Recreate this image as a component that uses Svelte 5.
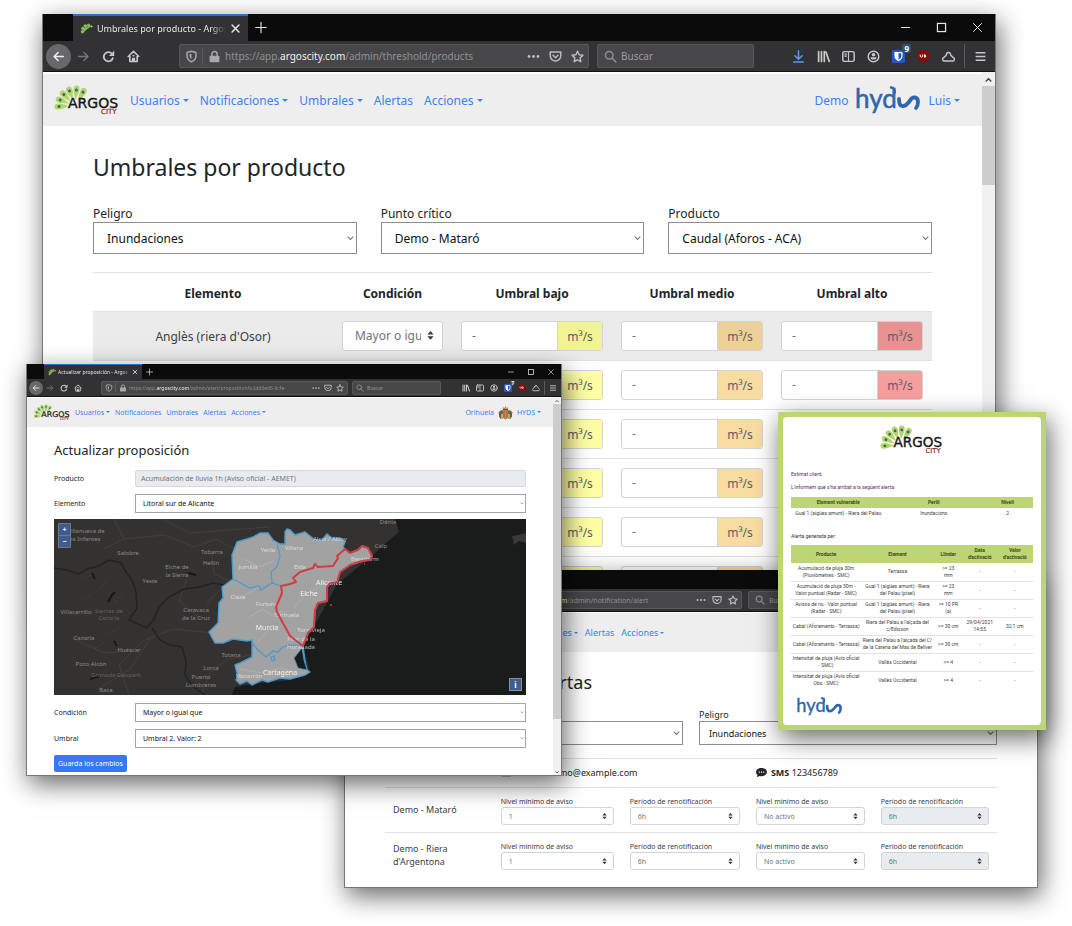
<script>
  const rows = [0, 1, 2, 3, 4, 5];
  const levels = ['low', 'mid', 'high'];
  const filters = [
    { id: 'peligro', label: 'Peligro', value: 'Inundaciones' },
    { id: 'punto', label: 'Punto crítico', value: 'Demo - Mataró' },
    { id: 'producto', label: 'Producto', value: 'Caudal (Aforos - ACA)' }
  ];
  const menuAll = [
    ['Usuarios', true], ['Notificaciones', true], ['Umbrales', true], ['Alertas', false], ['Acciones', true]
  ];
  const menuShort = [
    ['Usuarios', true], ['Notificaciones', false], ['Umbrales', false], ['Alertas', false], ['Acciones', true]
  ];
  const points = ['Demo - Mataró', "Demo - Riera d'Argentona"];
  const notices = [
    { label: 'Nivel mínimo de aviso', value: '1', off: false },
    { label: 'Período de renotificación', value: '6h', off: false },
    { label: 'Nivel mínimo de aviso', value: 'No activo', off: false },
    { label: 'Período de renotificación', value: '6h', off: true }
  ];
  const mail = [
    ['Acumulació de pluja 30m\n(Pluviòmetres - SMC)', 'Terrassa', '>= 23\nmm', '-', '-'],
    ['Acumulació de pluja 30m -\nValor puntual (Radar - SMC)', 'Gual 1 (aigües amunt) - Riera\ndel Palau (píxel)', '>= 23\nmm', '-', '-'],
    ['Avisos de riu - Valor puntual\n(Radar - SMC)', 'Gual 1 (aigües amunt) - Riera\ndel Palau (píxel)', '>= 10 PR\n(a)', '-', '-'],
    ['Cabal (Aforaments - Terrassa)', "Riera del Palau a l'alçada del\nc/Edisson", '>= 30 cm', '29/04/2021\n14:55', '32,1 cm'],
    ['Cabal (Aforaments - Terrassa)', "Riera del Palau a l'alçada del C/\nde la Carena del Mas de Bellver", '>= 30 cm', '-', '-'],
    ['Intensitat de pluja (Avís oficial\n- SMC)', 'Vallès Occidental', '>= 4', '-', '-'],
    ['Intensitat de pluja (Avís oficial\nObs - SMC)', 'Vallès Occidental', '>= 4', '-', '-']
  ];
  const petals = [-92, -68, -44, -20, 5, 30];
  const places = [
    [32, 14, 'Villanueva de'], [30, 22, 'los Infantes'], [74, 36, 'Salobre'], [158, 35, 'Tobarra'],
    [157, 46, 'Hellín'], [123, 50, 'Elche de'], [123, 58, 'la Sierra'], [96, 64, 'Yeste'],
    [22, 95, 'Villacarrillo'], [142, 93, 'Caravaca'], [142, 101, 'de la Cruz'], [30, 121, 'Cazorla'],
    [75, 133, 'Huéscar'], [37, 147, 'Pozo Alcón'], [177, 138, 'Totana'], [157, 151, 'Lorca'],
    [147, 160, 'Puerto'], [147, 168, 'Lumbreras'], [52, 173, 'Baza'], [327, 29, 'Calp'], [334, 5, 'Dénia']
  ];
  const parks = [[55, 94, 'Sierras de'], [55, 101, 'Cazorla'], [62, 158, 'Granada Geopark']];
  const inland = [
    [214, 33, 'Yecla'], [194, 50, 'Jumilla'], [184, 80, 'Cieza'], [213, 87, 'Fortuna'], [240, 31, 'Villena'],
    [246, 50, 'Elda'], [233, 98, 'Orihuela'], [276, 22, 'Alcoi / Alcoy'], [311, 42, 'Benidorm'], [257, 113, 'Torrevieja'],
    [247, 122, 'Pilar de la'], [247, 130, 'Horadada'], [195, 159, 'Mazarrón']
  ];
  const cities = [[213, 111, 'Murcia'], [275, 66, 'Alicante'], [255, 77, 'Elche'], [226, 156, 'Cartagena']];
</script>

{#snippet glyph(name)}
  <svg class="ic" viewBox="0 0 16 16" fill="none" stroke="currentColor" stroke-width="1.8" stroke-linecap="round" stroke-linejoin="round" aria-hidden="true">
    {#if name === 'back'}<path d="M14 8H2.5M7.5 3L2.5 8l5 5" />
    {:else if name === 'fwd'}<path d="M2 8h11.500M8.500 3l5 5-5 5" />
    {:else if name === 'reload'}<path d="M13.300 10A5.700 5.700 0 1 1 12 4.300" stroke-width="2.200" /><path d="M15 1v6.500H8.500z" fill="currentColor" stroke="none" />
    {:else if name === 'home'}<path d="M1.500 8L8 1.800 14.500 8M3.500 8v6.200h9V8M7 14v-3.500h2V14" stroke-width="2" /><path d="M7.500 7h1" />
    {:else if name === 'shield'}<path d="M8 1.500l5.500 1.500v4c0 4-2.500 6.300-5.500 7.500C5 13.300 2.500 11 2.500 7V3z" /><path d="M8 4.500v6.500C6 10 5.500 8.500 5.500 5.200z" fill="currentColor" stroke="none" />
    {:else if name === 'lock'}<path d="M4.800 7.500V5a3.200 3.200 0 0 1 6.400 0v2.500" /><rect x="2" y="7" width="12" height="8" rx="1" fill="currentColor" stroke="none" />
    {:else if name === 'dots'}<g fill="currentColor" stroke="none"><circle cx="2.500" cy="8" r="1.700" /><circle cx="8" cy="8" r="1.700" /><circle cx="13.500" cy="8" r="1.700" /></g>
    {:else if name === 'pocket'}<path d="M1.500 2.500h13v4.500a6.500 6.500 0 0 1-13 0zM5 6.500l3 3 3-3" />
    {:else if name === 'star'}<path d="M8 1.500l2 4.300 4.700.6-3.400 3.300.8 4.700L8 12.100l-4.100 2.300.8-4.700L1.300 6.400 6 5.800z" />
    {:else if name === 'mag'}<circle cx="6.500" cy="6.500" r="4.700" /><path d="M10 10l4.700 4.700" />
    {:else if name === 'down'}<path d="M8 1v10M3.500 7L8 11.300 12.500 7M2 14.800h12" stroke="#5a9df5" />
    {:else if name === 'lib'}<path d="M2 2v12M5.500 2v12M9 2v12M11 2.500l4 11.500" stroke-width="2.100" />
    {:else if name === 'side'}<rect x="1" y="2" width="14" height="12" rx="2" /><path d="M8 2v12M3.500 5h2M3.500 7.500h2" stroke-width="1.400" />
    {:else if name === 'user'}<circle cx="8" cy="8" r="6.500" /><path d="M4.300 8.800h7.400a3.700 3 0 0 1-7.400 0z" fill="currentColor" stroke="none" /><circle cx="8" cy="5.800" r="2.200" fill="currentColor" stroke="none" />
    {:else if name === 'vault'}<rect x="0" y="0" width="16" height="16" rx="1.500" fill="#2457c9" stroke="none" /><path d="M3 2.500h10v5c0 3-2 5-5 6.300C5 12.500 3 10.500 3 7.500z" fill="#fff" stroke="none" /><path d="M8 4h3.500v3.500c0 2-1.500 3.500-3.500 4.500z" fill="#2457c9" stroke="none" />
    {:else if name === 'ublock'}<path d="M8 0l7.500 2v6c0 3.500-4 6.500-7.500 8C4.500 14.500.5 11.500.5 8V2z" fill="#800f0d" stroke="none" /><path d="M4 6v2q1.500 1.500 3 0V6M9.300 6v3h.8q2-1.500 0-3z" stroke="#fff" stroke-width="1.200" />
    {:else if name === 'tri'}<path d="M5.500 5.500a2.500 2.500 0 0 1 5 0q0 1 1 1.700l2.700 2.300a2.200 2.200 0 0 1-1.700 4h-9a2.200 2.200 0 0 1-1.700-4l2.700-2.300q1-.7 1-1.700z" />
    {:else if name === 'menu'}<path d="M2 3.500h12M2 8h12M2 12.500h12" stroke-linecap="butt" />
    {:else if name === 'min'}<path d="M3 8h10" stroke-width="1.300" />
    {:else if name === 'max'}<rect x="3" y="3" width="10" height="10" stroke-width="1.500" stroke-linejoin="miter" />
    {:else if name === 'x'}<path d="M3 3l10 10M13 3L3 13" stroke-width="1.200" />
    {:else if name === 'close'}<path d="M3 3l10 10M13 3L3 13" stroke-width="2.200" />
    {:else if name === 'plus'}<path d="M8 1v14M1 8h14" stroke-width="1.500" />
    {:else if name === 'fav'}<g fill="#8cbf5a" stroke="#8cbf5a" stroke-width="1"><circle cx="3" cy="12" r="1.500" /><circle cx="3.500" cy="8" r="1.600" /><circle cx="6.500" cy="5" r="1.700" /><circle cx="10.500" cy="4" r="1.500" /><circle cx="14" cy="5.500" r="1" /><path d="M3 13l3-5 7-3-5 4z" /></g>
    {/if}
  </svg>
{/snippet}

{#snippet argos()}
  <svg class="argos" viewBox="0 0 64 30" role="img" aria-label="Argos City">
    {#each petals as a}
      <g transform="translate(20 21) rotate({a})">
        <path d="M0-6C-1-10-3-13-3-16.500C-3-19.500-2-20.500 0-20.500C2-20.500 3-19.500 3-16.500C3-13 1-10 0-6z" fill="#b4d56b" />
        <circle cy="-16" r="1.500" fill="#2f6f66" />
      </g>
    {/each}
    <text x="13" y="23" font-family="DejaVu Sans" font-size="14" fill="#161616" stroke="#161616" stroke-width=".4">ARGOS</text>
    <text x="46" y="29" font-family="DejaVu Sans" font-size="7" fill="#8a2a2a" stroke="#8a2a2a" stroke-width=".2">CITY</text>
  </svg>
{/snippet}

{#snippet hyds()}
  <svg class="hyds" viewBox="0 0 64 28" role="img" aria-label="hyds" fill="none" stroke="#2f66ad" stroke-linecap="round">
    <text x="-1" y="22" font-family="Lato" font-size="26" fill="#2f66ad" stroke="#2f66ad" stroke-width=".5">hyd</text>
    <path d="M35 1.500q4 0 3.800 5" stroke-width="2.400" />
    <path d="M43 13C43 23 49 21 53 16C57 9 62 11 62 16C62 19 61 21 60 22" stroke-width="3.800" />
  </svg>
{/snippet}

{#snippet updown()}
  <svg class="ud" viewBox="0 0 8 10" aria-hidden="true"><path d="M0.500 4L4 0l3.500 4zM0.500 6L4 10l3.500-4z" fill="#343a40" /></svg>
{/snippet}

{#snippet picker(id, value)}
  <span class="sel">
    <select {id}><option>{value}</option></select>
    <svg class="chev" viewBox="0 0 10 6" aria-hidden="true"><path d="M1 1l4 4 4-4" fill="none" stroke="#777" stroke-width="1.500" /></svg>
  </span>
{/snippet}

{#snippet chrome(title, host, path, badge, tools)}
  <header class="tabs">
    <div class="tab">{@render glyph('fav')}<span class="tabname">{title}</span><button aria-label="Cerrar pestaña">{@render glyph('close')}</button></div>
    <button class="newtab" aria-label="Nueva pestaña">{@render glyph('plus')}</button>
    <div class="winctl">
      <button aria-label="Minimizar">{@render glyph('min')}</button>
      <button aria-label="Maximizar">{@render glyph('max')}</button>
      <button aria-label="Cerrar">{@render glyph('x')}</button>
    </div>
  </header>
  <div class="bar">
    <button class="cell back" aria-label="Atrás">{@render glyph('back')}</button>
    <button class="cell dim" aria-label="Adelante">{@render glyph('fwd')}</button>
    <button class="cell" aria-label="Recargar">{@render glyph('reload')}</button>
    <button class="cell" aria-label="Inicio">{@render glyph('home')}</button>
    <div class="url">
      <span class="cell mute">{@render glyph('shield')}</span><i class="sep"></i>
      <span class="cell mute">{@render glyph('lock')}</span>
      <span class="addr">https://app.<b>{host}</b>{path}</span>
      <span class="act">{@render glyph('dots')}{@render glyph('pocket')}{@render glyph('star')}</span>
    </div>
    <div class="search">{@render glyph('mag')}<input aria-label="Buscar" placeholder="Buscar" /></div>
    <div class="tools">
      {#each tools as t}
        <button class="cell" aria-label={t}>{@render glyph(t)}{#if t === 'vault'}<sup>{badge}</sup>{/if}</button>
      {/each}
      <i class="sep"></i>
      <button class="cell menu" aria-label="Menú">{@render glyph('menu')}</button>
    </div>
  </div>
{/snippet}

{#snippet links(items)}
  {#each items as [name, drop]}<a href="#top" class:drop>{name}</a>{/each}
{/snippet}

<main class="desk">
  <section class="win w1">
    {@render chrome('Umbrales por producto - Argos', 'argoscity.com', '/admin/threshold/products', '9', ['down', 'lib', 'side', 'user', 'vault', 'ublock', 'tri'])}
    <div class="view">
      <div class="page">
        <nav>{@render argos()}{@render links(menuAll)}<span class="fill"></span><a href="#top">Demo</a>{@render hyds()}<a href="#top" class="drop">Luis</a></nav>
        <div class="body">
          <h1>Umbrales por producto</h1>
          <div class="filters">
            {#each filters as f}
              <div><label for={f.id}>{f.label}</label>{@render picker(f.id, f.value)}</div>
            {/each}
          </div>
          <table class="limits">
            <colgroup><col style="width:28.6%" /><col style="width:14.2%" /><col /><col /><col /></colgroup>
            <thead><tr><th>Elemento</th><th>Condición</th><th>Umbral bajo</th><th>Umbral medio</th><th>Umbral alto</th></tr></thead>
            <tbody>
              {#each rows as r}
                <tr class:on={r === 0}>
                  <td>{#if r === 0}Anglès (riera d'Osor){/if}</td>
                  <td>{#if r === 0}<span class="sel cust"><select aria-label="Condición"><option>Mayor o igual que</option></select>{@render updown()}</span>{/if}</td>
                  {#each levels as l}
                    <td><div class="group"><input aria-label="Umbral" placeholder="-" /><span class={l}>m³/s</span></div></td>
                  {/each}
                </tr>
              {/each}
            </tbody>
          </table>
        </div>
      </div>
      <div class="scroll"><svg viewBox="0 0 10 6" aria-hidden="true"><path d="M1 5l4-4 4 4" fill="none" stroke="#444" stroke-width="2" /></svg><i></i></div>
    </div>
  </section>

  <section class="win w3">
    {@render chrome('Alertas', 'argoscity.com', '/admin/notification/alert', '9', ['down', 'lib', 'side', 'user', 'vault', 'ublock', 'tri'])}
    <div class="page">
      <nav>{@render argos()}{@render links(menuAll)}</nav>
      <div class="body">
        <h1>Configuración de alertas</h1>
        <div class="filters">
          <div><label for="usuario">Usuario</label>{@render picker('usuario', 'Demo')}</div>
          <div><label for="peligro3">Peligro</label>{@render picker('peligro3', 'Inundaciones')}</div>
        </div>
        <table class="alerts">
          <colgroup><col style="width:17.6%" /><col style="width:21.1%" /><col style="width:20.6%" /><col style="width:20.4%" /><col /></colgroup>
          <thead>
            <tr>
              <th>Punto crítico</th>
              <th colspan="2"><svg viewBox="0 0 12 10" aria-hidden="true"><path d="M1 1h10v8H1z" fill="#212529" /><path d="M1 2l5 4 5-4" fill="none" stroke="#fff" /></svg><b>Correo</b> demo@example.com</th>
              <th colspan="2"><svg viewBox="0 0 12 10" aria-hidden="true"><path d="M6 0c3.500 0 6 1.900 6 4.400S9.500 9 6 9c-.8 0-1.500-.1-2.200-.3L.8 10l.8-2.500C.6 6.700 0 5.600 0 4.400 0 1.900 2.500 0 6 0z" fill="#212529" /><path d="M3 4.500h1.200M5.400 4.500h1.200M7.800 4.500H9" stroke="#fff" stroke-width="1.400" /></svg><b>SMS</b> 123456789</th>
            </tr>
          </thead>
          <tbody>
            {#each points as p, i}
              <tr>
                <td class="name">{p}</td>
                {#each notices as n, j}
                  <td><label for="n{i}{j}">{n.label}</label><span class="sel cust"><select id="n{i}{j}" disabled={n.off}><option>{n.value}</option></select>{@render updown()}</span></td>
                {/each}
              </tr>
            {/each}
          </tbody>
        </table>
      </div>
    </div>
  </section>

  <section class="win w2">
    {@render chrome('Actualizar proposición - Argos', 'argoscity.com', '/admin/alert/proposition/b2dd0e66-6cfe-', '7', ['lib', 'side', 'user', 'vault', 'ublock', 'tri'])}
    <div class="view">
      <div class="page">
        <nav>{@render argos()}{@render links(menuShort)}<span class="fill"></span><a href="#top">Orihuela</a>
          <svg class="arms" viewBox="0 0 30 30" role="img" aria-label="Orihuela">
            <path d="M3 12l6-2 2 6-5 4 5 6-6 2-3-5zM27 12l-6-2-2 6 5 4-5 6 6 2 3-5z" fill="#397b4e" />
            <path d="M1 14l6 3-4 6zM29 14l-6 3 4 6z" fill="#b3343b" />
            <path d="M9 8l1-4 3 2 2-5 2 5 3-2 1 4z" fill="#c3a04f" /><path d="M10 8h10v3H10z" fill="#8c3a35" />
            <path d="M9 11h12v11q-1 6-6 7-5-1-6-7z" fill="#a8563f" /><path d="M12 12v15M15 12v16M18 12v15" stroke="#d2a74d" stroke-width="1.300" /><path d="M6 27l3-5M24 27l-3-5" stroke="#d7b25e" stroke-width="3" />
          </svg>
          <a href="#top" class="drop">HYDS</a></nav>
        <div class="body">
          <h1>Actualizar proposición</h1>
          <div class="form">
            <label for="prod">Producto</label><input id="prod" disabled value="Acumulación de lluvia 1h (Aviso oficial - AEMET)" />
            <label for="elem">Elemento</label>{@render picker('elem', 'Litoral sur de Alicante')}
          </div>
          <div class="map">
            <svg viewBox="0 0 472 176" preserveAspectRatio="xMinYMin slice" role="img" aria-label="Mapa" fill="none">
              <rect width="472" height="176" fill="#333231" />
              <g stroke="#464543" stroke-width=".7">
                <path d="M60 0l10 20 40-4 30 12 22-8 18 10M70 20L50 30M158 35l2 20 18 8M75 176l-10-30 24-24 30-12 40 4M147 100l-22-18 8-22M157 152l18-12 22-4M157 152l-10 24M96 120l-20 30-32 20M152 85l14-14M108 0l28 14 80-6M20 120l30 14 24-2" />
                <path d="M30 80l8-6M46 70l7-9M62 84l6-10M54 116l12-8M70 98l8-6M40 130l12-8M30 60l9-5" stroke-dasharray="3 2" />
              </g>
              <path d="M0 49l13 2 12 4 8-5 12-3 10-6 12 3 5 9 6 8 4 12 1 16-8 12 18 8 7-9 5-12 10-10 15-8 16-2 13-4 12 2M98 109l8 12 10 5 12 2 4 14-1 14 8 12 12 8" stroke="#232322" stroke-width="1.500" />
              <path d="M38 54l3 6M54 83l4-7 3-3M36 160l10-3M134 54l8 2M60 122l3 5" stroke="#171717" stroke-width="2" />
              <path d="M341 0l4 13-12 10-15 14-35 28-10 19-13 23-11 20 7 26-20 8-38 4-17 3-3 8h294V0z" fill="#1a1b1b" />
              <path d="M472 14l-8 2-6 1 2 9 5-4 7 2z" fill="#3a3938" />
              <path class="zone" d="M179 60l-1-24 5-13 10-3 6-2 7-4h8l5 7 7 4h5V13l2-3 3 1 5 5 10-3 10 8h7l5-6 5 4h8l5 4-2 5 2 2 5 4 8-3 4-4 6 2 4 8-2 4-8 1-12 4-10 7-3 10-7 1-3 4v14l-9 2-3 7-1 17-6 6-5 13 2 16 2 8 3 2-5 3-15 4-10-1-12 4-6-2-10 5-5-4-7 3-4-4 2-3-3-12 5-2 12-6V121l-5 1-14-2-10 4h-8l-6-11 9-9 1-20 4-5-1-11z" fill="#a2a2a2" stroke="#4b9bd1" stroke-width="1.400" stroke-linejoin="round" />
              <path d="M195 98l14-8 8 6 12-4M185 80l20-12M215 110l-12 14M240 90l12-16 14-6M186 150l20 4 20-5 14 4M190 40l15 8 15-6" stroke="#b4b4b4" stroke-width=".8" />
              <path d="M179 60l17 9 9-2 2 4 11-7 9 3M218 64l-1-11 6-5 3-12-3-11M198 124l6 7 8 7 7-6 5 1 5-5 7-2 13 1M217 138l3-1 1 4-3 1z" stroke="#4b9bd1" stroke-width="1.300" />
              <path d="M248 129l-8 10 4 10 9 2-3-10z" fill="#1a1b1b" stroke="#4b9bd1" stroke-width=".8" />
              <g fill="#f0f0f0" font-size="6" text-anchor="middle">
                {#each inland as [x, y, t]}<text {x} {y} opacity=".7">{t}</text>{/each}
              </g>
              <g fill="#fff" font-size="7" text-anchor="middle">{#each cities as [x, y, t]}<text {x} {y} opacity=".85">{t}</text>{/each}</g>
              <path d="M291 30l5 4 8-3 4-4 6 2 4 8-2 4-8 1-12 4-10 7-3 10-7 1-3 4v14l-9 2-3 7-1 17-6 6-5 13-13-10-13-24-1-5 6-14-1-7 9-2 6-2-3-4 7-6 13-4 2-4 3 3 15-1 5-8-1-2z" stroke="#d23d45" stroke-width="2" stroke-linejoin="round" />
              <path d="M310 45h1M276 86h2" stroke="#d23d45" stroke-width="1.600" />
              <g fill="#8b8a88" font-size="6" text-anchor="middle">{#each places as [x, y, t]}<text {x} {y}>{t}</text>{/each}</g>
              <g fill="#62615f" font-size="6" text-anchor="middle">{#each parks as [x, y, t]}<text {x} {y}>{t}</text>{/each}</g>
            </svg>
            <div class="zoomer"><button>+</button><button>−</button></div>
            <button class="info">i</button>
          </div>
          <div class="form">
            <label for="cond">Condición</label>{@render picker('cond', 'Mayor o igual que')}
            <label for="umb">Umbral</label>{@render picker('umb', 'Umbral 2. Valor: 2')}
          </div>
          <button class="save">Guarda los cambios</button>
        </div>
      </div>
      <div class="scroll"><svg viewBox="0 0 10 6" aria-hidden="true"><path d="M1 5l4-4 4 4" fill="none" stroke="#444" stroke-width="2" /></svg><i></i><svg viewBox="0 0 10 6" aria-hidden="true"><path d="M1 1l4 4 4-4" fill="none" stroke="#444" stroke-width="2" /></svg></div>
    </div>
  </section>

  <article class="mail">
    <div class="sheet">
      {@render argos()}
      <p class="hi">Estimat client,</p>
      <p class="hi">L'informem que s'ha arribat a la següent alerta:</p>
      <table class="one">
        <colgroup><col style="width:39%" /><col style="width:40%" /><col /></colgroup>
        <thead><tr><th>Element vulnerable</th><th>Perill</th><th>Nivell</th></tr></thead>
        <tbody><tr><td>Gual 1 (aigües amunt) - Riera del Palau</td><td>Inundacions</td><td>2</td></tr></tbody>
      </table>
      <p class="by">Alerta generada per:</p>
      <table class="many">
        <colgroup><col style="width:29%" /><col style="width:30%" /><col style="width:12%" /><col style="width:14%" /><col /></colgroup>
        <thead><tr><th>Producte</th><th>Element</th><th>Llindar</th><th>Data{'\n'}d'activació</th><th>Valor{'\n'}d'activació</th></tr></thead>
        <tbody>
          {#each mail as line}<tr>{#each line as c}<td>{c}</td>{/each}</tr>{/each}
        </tbody>
      </table>
      {@render hyds()}
    </div>
  </article>
</main>

<style>
  :global(body) { margin: 0; background: #fff; }
  * { box-sizing: border-box; }
  .desk { position: relative; min-height: 926px; overflow: hidden; font-family: "Noto Sans", "Open Sans", sans-serif; color: #212529; }
  button, input, select { font: inherit; color: inherit; border: 0; background: none; padding: 0; margin: 0; min-width: 0; border-radius: 0; }
  select { appearance: none; width: 100%; }
  a { text-decoration: none; }
  h1 { margin: 0; font-weight: 400; white-space: nowrap; }
  table { width: 100%; border-collapse: collapse; table-layout: fixed; }

  .win { position: absolute; background: #fff; border: 1px solid #777; border-top: 0; overflow: hidden; box-shadow: 3px 8px 24px rgba(0, 0, 0, .6); font-size: var(--fs); }
  .w1 { left: 42px; right: 76px; top: 14px; --fs: 12px; --ui: 10px; --tabf: 9px; --tabh: 27px; --barh: 31px; --cell: 25px; --ic: 13px; --tabw: 175px; --tabx: 30px; --field: 24px; --ugap: 33px; --sgap: 8px; --sw: 157px; --tgap: 32px; --navh: 52px; --logo: 64px; --ngap: 11px; --pad: 50px; --ctl: 36px; }
  .w2 { left: 26px; right: 510px; top: 364px; --fs: 7px; --ui: 5px; --tabf: 5px; --tabh: 15px; --barh: 18px; --cell: 14px; --ic: 8px; --tabw: 98px; --tabx: 17px; --field: 14px; --ugap: 16px; --sgap: 4px; --sw: 89px; --tgap: 18px; --navh: 29px; --logo: 36px; --ngap: 5px; --pad: 27px; --ctl: 20px; }
  .w3 { left: 344px; right: 34px; top: 570px; --fs: 9px; --ui: 7px; --tabf: 7px; --tabh: 19px; --barh: 23px; --cell: 18px; --ic: 10px; --tabw: 127px; --tabx: 22px; --field: 18px; --ugap: 24px; --sgap: 6px; --sw: 114px; --tgap: 22px; --navh: 39px; --logo: 46px; --ngap: 7px; --pad: 40px; --ctl: 26px; }

  .ic { width: var(--ic); height: var(--ic); flex: none; display: block; }
  .tabs { display: flex; height: var(--tabh); background: #0b0b0c; padding-left: var(--tabx); color: #e6e6e6; align-items: center; }
  .tab { display: flex; align-items: center; gap: 4px; width: var(--tabw); height: 100%; background: #323234; border-top: 2px solid #2d70c8; padding: 0 7px; font-size: var(--tabf); }
  .tabname { flex: 1; overflow: hidden; white-space: nowrap; mask-image: linear-gradient(90deg, #000 88%, transparent); }
  .tab button .ic { width: calc(var(--ic) - 2px); }
  .w2 .tab { border-top-width: 1px; gap: 2px; padding: 0 4px; }
  .newtab { margin-left: 7px; }
  .w2 .newtab { margin-left: 4px; }
  .newtab .ic { width: calc(var(--ic) - 1px); }
  .winctl { display: flex; margin-left: auto; }
  .winctl button { width: var(--ctl); display: grid; place-items: center; }
  .bar { display: flex; align-items: center; height: var(--barh); background: #323234; border-bottom: 1px solid #111; color: #c8c8c9; padding: 0 2px 0 3px; }
  .w2 .bar { padding: 0 1px 0 2px; }
  .cell { width: var(--cell); height: var(--cell); display: grid; place-items: center; flex: none; position: relative; }
  .back { background: #68686a; border-radius: 50%; color: #eee; }
  .dim { color: #77777a; }
  .mute { color: #a9a9ab; }
  .url, .search { display: flex; align-items: center; height: var(--field); background: #474749; border: 1px solid #59595b; border-radius: 2px; font-size: var(--ui); color: #8f8f92; min-width: 0; }
  .url { flex: 1; margin-left: var(--ugap); overflow: hidden; }
  .url .cell { width: calc(var(--cell) - 3px); }
  .w2 .url .cell { width: 13px; }
  .addr { flex: 1; white-space: nowrap; overflow: hidden; }
  .w2 .addr { mask-image: linear-gradient(90deg, #000 85%, transparent); }
  .w3 .addr { padding-left: 7px; }
  .addr b { font-weight: 400; color: #f0f0f0; }
  .act { display: flex; gap: calc(var(--cell) - var(--ic) - 3px); padding: 0 4px; color: #bdbdbf; }
  .w2 .act { gap: 4px; padding: 0 3px; }
  .w3 .act { gap: 6px; padding: 0 3px; }
  .search { flex: none; width: var(--sw); margin-left: var(--sgap); gap: 4px; padding-left: 6px; }
  .w2 .search { padding-left: 3px; gap: 3px; }
  .search input { width: 100%; height: 100%; }
  .search input::placeholder { color: #9b9b9e; opacity: 1; }
  .tools { display: flex; align-items: center; margin-left: var(--tgap); }
  .sep { width: 1px; height: 80%; background: #5a5a5d; }
  .tools .sep { height: var(--field); margin: 0 3px; }
  .w2 .tools .sep { margin: 0 1px; }
  sup { position: absolute; right: 0; top: 0; padding: 0 2px; background: #35526b; color: #fff; font-size: 8px; line-height: 9px; font-weight: 700; border-radius: 2px; }
  .w2 sup { font-size: 5px; line-height: 5px; padding: 0 1px; }

  .view { display: flex; }
  .page { flex: 1; min-width: 0; }
  .scroll { width: 13px; background: #f0f0f0; display: flex; flex-direction: column; align-items: center; padding-top: 6px; }
  .scroll svg { width: 7px; flex: none; }
  .scroll i { width: 100%; height: 99px; margin-top: 4px; background: #cdcdcd; }
  .w2 .scroll { width: 8px; padding: 3px 0 2px; }
  .w2 .scroll svg { width: 4px; }
  .w2 .scroll i { height: auto; flex: 1; margin: 2px 0 52px; }
  nav { display: flex; align-items: center; gap: var(--ngap); height: var(--navh); margin-top: 1px; padding: 0 22px 0 12px; background: #eee; white-space: nowrap; }
  .w1 nav { margin-top: 2px; }
  .w2 nav { padding: 0 12px 0 7px; }
  .w3 nav { padding: 0 17px 0 10px; }
  nav a { color: #3b82f3; }
  nav .fill { flex: 1; }
  .drop::after { content: ""; display: inline-block; margin-left: 3px; vertical-align: 3px; border: 3px solid transparent; border-top-color: currentColor; border-bottom: 0; }
  .w2 .drop::after, .w3 .drop::after { border-width: 2px; border-bottom: 0; vertical-align: 2px; margin-left: 2px; }
  .argos { width: var(--logo); flex: none; display: block; overflow: visible; }
  .hyds { width: var(--logo); flex: none; display: block; overflow: visible; }
  .w1 .hyds { margin: 0 -3px; }
  .arms { width: 15px; height: 15px; margin: 0 -1px; }
  .body { padding: 0 var(--pad); }

  .sel { display: grid; align-items: center; }
  .sel > * { grid-area: 1 / 1; }
  .sel svg { justify-self: end; pointer-events: none; }
  .sel select { border: 1px solid #8d8d8d; background: #fff; color: #111; text-overflow: clip; overflow: hidden; }
  .chev { width: 7px; margin-right: 3px; }
  .filters { display: grid; }
  .filters label { display: block; }
  .cust select { border: 1px solid #ced4da; border-radius: 3px; color: #6c757d; }

  .w1 .body { padding-top: 23px; }
  .w1 h1 { font-size: 23px; line-height: 36px; }
  .w1 .filters { grid-template-columns: repeat(3, 1fr); gap: 24px; margin-top: 20px; padding-bottom: 18px; border-bottom: 1px solid #dee2e6; }
  .w1 .filters label { line-height: 17px; }
  .w1 .filters select { height: 32px; padding-left: 13px; }
  .limits th { height: 38px; padding: 3px 0 0; }
  .limits td { height: 49px; padding: 0 9px; text-align: center; border-top: 1px solid #dee2e6; color: #3c4043; }
  .limits .on td { background: #ebebeb; }
  .limits td:first-child { padding-top: 2px; }
  .limits .cust select { height: 30px; padding: 0 21px 0 12px; }
  .ud { width: 7px; margin-right: 9px; }
  .group { display: flex; height: 30px; border: 1px solid #ced4da; border-radius: 3px; overflow: hidden; background: #fff; }
  .group input { flex: 1; padding-left: 10px; }
  .group input::placeholder { color: #6c757d; opacity: 1; }
  .group span { width: 45px; line-height: 30px; border-left: 1px solid #ced4da; color: #5b5e62; }
  .low { background: #feffa4; } .mid { background: #f9dca2; } .high { background: #f49e9e; }
  .on .low { background: #f2f394; } .on .mid { background: #edd096; } .on .high { background: #e89292; }

  .w3 .body { padding-top: 17px; padding-bottom: 10px; }
  .w3 h1 { font-size: 18px; line-height: 26px; }
  .w3 .filters { grid-template-columns: repeat(2, 1fr); gap: 16px; margin-top: 14px; padding-bottom: 13px; border-bottom: 1px solid #dee2e6; }
  .w3 .filters label { line-height: 12px; }
  .w3 .filters select { height: 24px; padding-left: 9px; }
  .alerts th { height: 28px; padding: 0 8px; text-align: left; font-weight: 400; white-space: nowrap; }
  .alerts th svg { width: 11px; vertical-align: -1px; margin-right: 4px; }
  .alerts td { height: 45px; padding: 0 8px; border-top: 1px solid #dee2e6; color: #3c4043; line-height: 13px; }
  .alerts label { display: block; font-size: 7px; line-height: 11px; margin-top: 2px; white-space: nowrap; }
  .alerts select { height: 18px; padding-left: 7px; font-size: 7px; }
  .alerts .ud { width: 5px; margin-right: 7px; }
  .alerts select:disabled { background: #e9ecef; opacity: 1; }

  .w2 .body { padding-top: 13px; padding-bottom: 3px; }
  .w2 h1 { font-size: 13px; line-height: 20px; margin-bottom: 10px; }
  .form { display: grid; grid-template-columns: 81px 1fr; row-gap: 7px; align-items: center; }
  .form label { line-height: 15px; }
  .form input { height: 17px; background: #e9ecef; border: 1px solid #d5d9dd; border-radius: 2px; padding-left: 5px; color: #6c757d; }
  .form select { height: 19px; padding-left: 7px; border-color: #a5a5a5; }
  .form .chev { width: 4px; margin-right: 2px; }
  .map { position: relative; height: 176px; margin: 6px 0 8px; overflow: hidden; background: #1a1b1b; }
  .map svg { display: block; width: 100%; height: 100%; }
  .zoomer { position: absolute; left: 4px; top: 4px; padding: 1px; background: #777; display: grid; gap: 1px; border-radius: 1px; }
  .zoomer button { width: 11px; height: 11px; background: #3f5c92; color: #fff; font-weight: 700; font-size: 7px; line-height: 10px; }
  .info { position: absolute; right: 4px; bottom: 4px; width: 13px; height: 13px; background: #3f5c92; border: 1px solid #8b8f96; color: #fff; font-weight: 700; font-size: 8px; line-height: 10px; }
  .save { height: 17px; margin-top: 7px; padding: 0 4px; background: #3478f6; color: #fff; border-radius: 2px; display: block; }

  .mail { position: absolute; right: 26px; width: 268px; top: 412px; padding: 5px; background: #bdd575; box-shadow: 3px 8px 24px rgba(0, 0, 0, .6); font-family: Roboto, sans-serif; font-size: 5px; line-height: 7px; }
  .sheet { background: #fff; border-radius: 4px; padding: 8px; }
  .sheet .argos { width: 62px; margin: 0 auto 17px; }
  .sheet p { margin: 0 0 6px; color: #333; }
  .sheet .hi { color: #5c2a63; }
  .sheet .by { margin: 14px 0 5px; }
  .mail th { background: #bdd575; padding: 0; white-space: pre-line; color: #3c4a1c; font-weight: 700; }
  .mail td { padding: 0; text-align: center; white-space: pre; line-height: 7px; color: #444; }
  .one th, .one td { height: 11px; }
  .many th, .many td { height: 18px; }
  .many td { border-bottom: 1px solid #e3e3e3; }
  .many tr:last-child td { border-bottom: 0; }
  .sheet .hyds { width: 45px; margin: 8px 0 0 6px; }
</style>
